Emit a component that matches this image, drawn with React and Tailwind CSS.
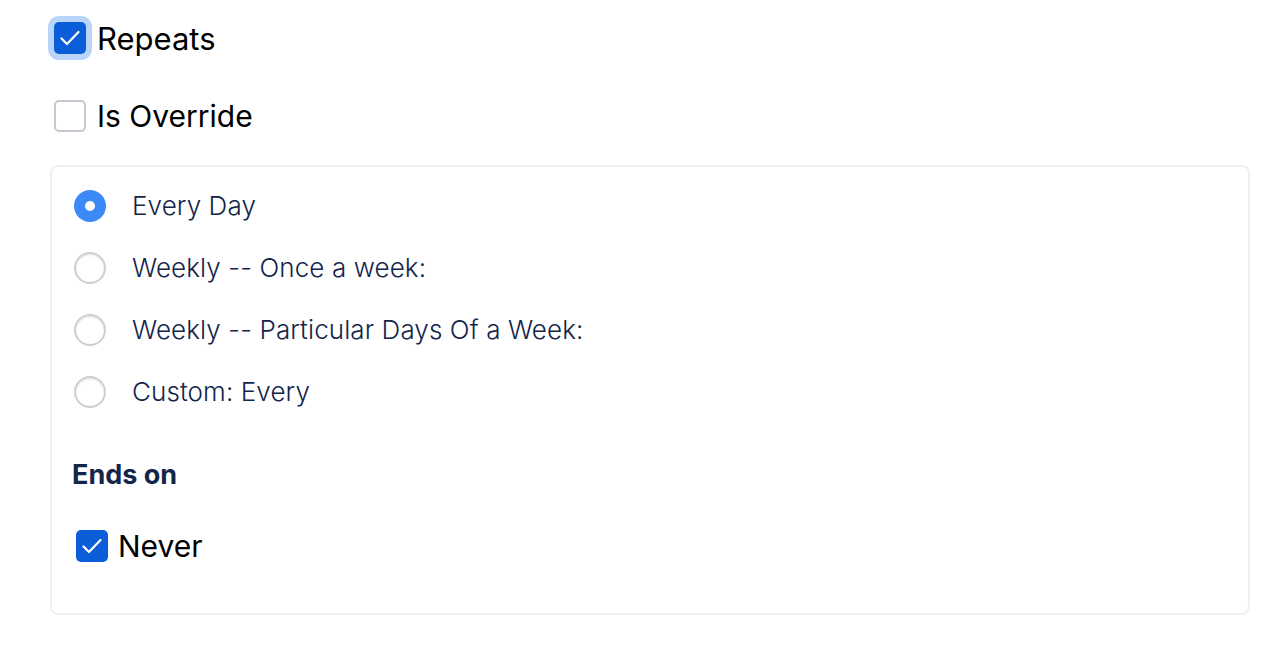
const options = [
  { label: 'Every Day', checked: true },
  { label: 'Weekly -- Once a week:', checked: false },
  { label: 'Weekly -- Particular Days Of a Week:', checked: false },
  { label: 'Custom: Every', checked: false }
];

const Check = () => (
  <svg className="w-[22px] h-[22px] shrink-0" viewBox="0 0 22 22" fill="none" stroke="white" strokeWidth="2.2" strokeLinecap="round" strokeLinejoin="round">
    <path d="M2.5 11.5l5.5 5.5L19.5 5" />
  </svg>
);

const App = () => {
  return (
    <div className="min-h-screen bg-white font-['Inter',sans-serif]">
      <div className="pl-[54px] pt-[22px] pr-[38px]">
        {/* Repeats */}
        <div className="flex items-center gap-[11px] h-[32px]">
          <div className="w-[32px] h-[32px] rounded-[5px] bg-[#0b5ed7] flex items-center justify-center shadow-[0_0_0_6px_#b9d4fb]">
            <Check />
          </div>
          <span className="text-[31px] text-black leading-none">Repeats</span>
        </div>

        {/* Is Override */}
        <div className="flex items-center gap-[11px] h-[32px] mt-[46px]">
          <div className="w-[32px] h-[32px] rounded-[5px] border-2 border-[#c4c8d0] bg-white" />
          <span className="text-[30px] text-black leading-none">Is Override</span>
        </div>
      </div>

      {/* Recurrence card */}
      <div className="ml-[50px] mr-[38px] mt-[33px] h-[450px] border-2 border-[#f0f0f0] rounded-[8px] px-[20px] pt-[23px]">
        <div className="flex flex-col gap-[30px]">
          {options.map((o) => (
            <div key={o.label} className="flex items-center gap-[26px] h-[32px] pl-[2px]">
              {o.checked ? (
                <div className="w-[32px] h-[32px] rounded-full bg-[#3b8af7] flex items-center justify-center">
                  <div className="w-[10px] h-[10px] rounded-full bg-white" />
                </div>
              ) : (
                <div className="w-[32px] h-[32px] rounded-full border-2 border-[#cfcfcf] bg-white shadow-[inset_0_1px_2px_rgba(0,0,0,0.12)]" />
              )}
              <span className="font-['Inter',sans-serif] font-light text-[26px] tracking-[0.1px] text-[#13254a] leading-none">{o.label}</span>
            </div>
          ))}
        </div>

        <h3 className="mt-[53px] font-['Inter',sans-serif] font-bold text-[27px] text-[#13254a] leading-none">Ends on</h3>

        <div className="flex items-center gap-[10px] h-[32px] mt-[42px] pl-[4px]">
          <div className="w-[32px] h-[32px] rounded-[5px] bg-[#0b5ed7] flex items-center justify-center">
            <Check />
          </div>
          <span className="text-[30px] text-black leading-none">Never</span>
        </div>
      </div>
    </div>
  );
};

export default App;
